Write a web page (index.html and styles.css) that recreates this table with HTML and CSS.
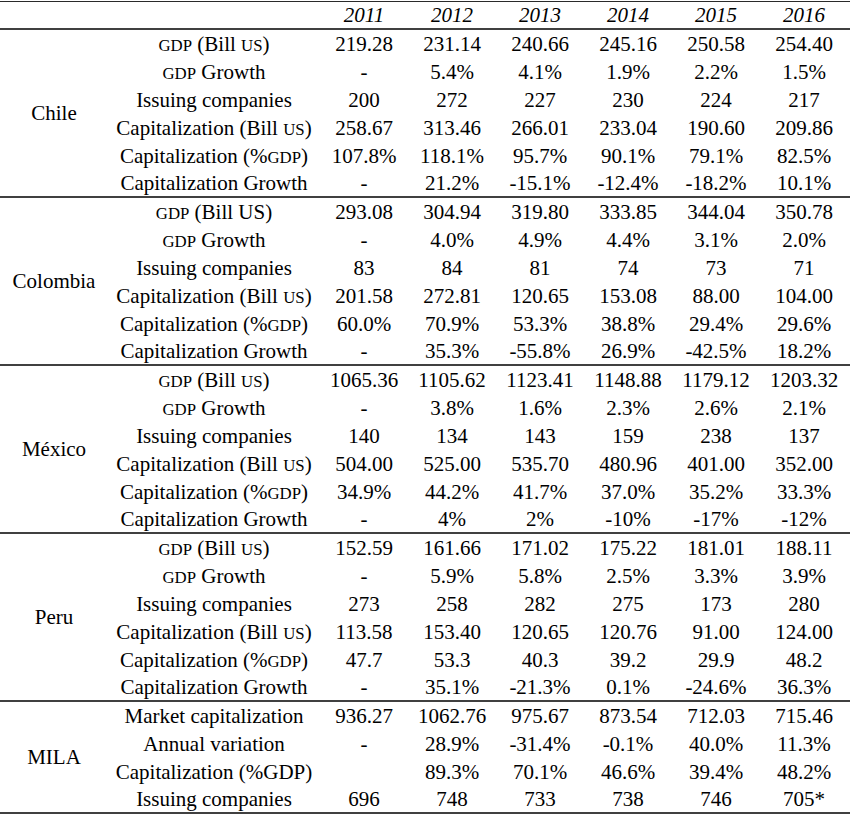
FILE: index.html
```html
<!DOCTYPE html>
<html>
<head>
<meta charset="utf-8">
<link rel="stylesheet" href="styles.css">
</head>
<body>
<div class="table">
  <div class="head">
    <div></div><div></div>
    <div class="yr">2011</div><div class="yr">2012</div><div class="yr">2013</div><div class="yr">2014</div><div class="yr">2015</div><div class="yr">2016</div>
  </div>

  <div class="group six">
    <div class="country">Chile</div>
    <div class="metric"><span class="sc">GDP</span> (Bill <span class="sc">US</span>)</div>
    <div>219.28</div><div>231.14</div><div>240.66</div><div>245.16</div><div>250.58</div><div>254.40</div>
    <div class="metric"><span class="sc">GDP</span> Growth</div>
    <div>-</div><div>5.4%</div><div>4.1%</div><div>1.9%</div><div>2.2%</div><div>1.5%</div>
    <div class="metric">Issuing companies</div>
    <div>200</div><div>272</div><div>227</div><div>230</div><div>224</div><div>217</div>
    <div class="metric">Capitalization (Bill <span class="sc">US</span>)</div>
    <div>258.67</div><div>313.46</div><div>266.01</div><div>233.04</div><div>190.60</div><div>209.86</div>
    <div class="metric">Capitalization (%<span class="sc">GDP</span>)</div>
    <div>107.8%</div><div>118.1%</div><div>95.7%</div><div>90.1%</div><div>79.1%</div><div>82.5%</div>
    <div class="metric">Capitalization Growth</div>
    <div>-</div><div>21.2%</div><div>-15.1%</div><div>-12.4%</div><div>-18.2%</div><div>10.1%</div>
  </div>

  <div class="group six">
    <div class="country">Colombia</div>
    <div class="metric"><span class="sc">GDP</span> (Bill US)</div>
    <div>293.08</div><div>304.94</div><div>319.80</div><div>333.85</div><div>344.04</div><div>350.78</div>
    <div class="metric"><span class="sc">GDP</span> Growth</div>
    <div>-</div><div>4.0%</div><div>4.9%</div><div>4.4%</div><div>3.1%</div><div>2.0%</div>
    <div class="metric">Issuing companies</div>
    <div>83</div><div>84</div><div>81</div><div>74</div><div>73</div><div>71</div>
    <div class="metric">Capitalization (Bill <span class="sc">US</span>)</div>
    <div>201.58</div><div>272.81</div><div>120.65</div><div>153.08</div><div>88.00</div><div>104.00</div>
    <div class="metric">Capitalization (%<span class="sc">GDP</span>)</div>
    <div>60.0%</div><div>70.9%</div><div>53.3%</div><div>38.8%</div><div>29.4%</div><div>29.6%</div>
    <div class="metric">Capitalization Growth</div>
    <div>-</div><div>35.3%</div><div>-55.8%</div><div>26.9%</div><div>-42.5%</div><div>18.2%</div>
  </div>

  <div class="group six">
    <div class="country">México</div>
    <div class="metric"><span class="sc">GDP</span> (Bill <span class="sc">US</span>)</div>
    <div>1065.36</div><div>1105.62</div><div>1123.41</div><div>1148.88</div><div>1179.12</div><div>1203.32</div>
    <div class="metric"><span class="sc">GDP</span> Growth</div>
    <div>-</div><div>3.8%</div><div>1.6%</div><div>2.3%</div><div>2.6%</div><div>2.1%</div>
    <div class="metric">Issuing companies</div>
    <div>140</div><div>134</div><div>143</div><div>159</div><div>238</div><div>137</div>
    <div class="metric">Capitalization (Bill <span class="sc">US</span>)</div>
    <div>504.00</div><div>525.00</div><div>535.70</div><div>480.96</div><div>401.00</div><div>352.00</div>
    <div class="metric">Capitalization (%<span class="sc">GDP</span>)</div>
    <div>34.9%</div><div>44.2%</div><div>41.7%</div><div>37.0%</div><div>35.2%</div><div>33.3%</div>
    <div class="metric">Capitalization Growth</div>
    <div>-</div><div>4%</div><div>2%</div><div>-10%</div><div>-17%</div><div>-12%</div>
  </div>

  <div class="group six">
    <div class="country">Peru</div>
    <div class="metric"><span class="sc">GDP</span> (Bill <span class="sc">US</span>)</div>
    <div>152.59</div><div>161.66</div><div>171.02</div><div>175.22</div><div>181.01</div><div>188.11</div>
    <div class="metric"><span class="sc">GDP</span> Growth</div>
    <div>-</div><div>5.9%</div><div>5.8%</div><div>2.5%</div><div>3.3%</div><div>3.9%</div>
    <div class="metric">Issuing companies</div>
    <div>273</div><div>258</div><div>282</div><div>275</div><div>173</div><div>280</div>
    <div class="metric">Capitalization (Bill <span class="sc">US</span>)</div>
    <div>113.58</div><div>153.40</div><div>120.65</div><div>120.76</div><div>91.00</div><div>124.00</div>
    <div class="metric">Capitalization (%<span class="sc">GDP</span>)</div>
    <div>47.7</div><div>53.3</div><div>40.3</div><div>39.2</div><div>29.9</div><div>48.2</div>
    <div class="metric">Capitalization Growth</div>
    <div>-</div><div>35.1%</div><div>-21.3%</div><div>0.1%</div><div>-24.6%</div><div>36.3%</div>
  </div>

  <div class="group four">
    <div class="country">MILA</div>
    <div class="metric">Market capitalization</div>
    <div>936.27</div><div>1062.76</div><div>975.67</div><div>873.54</div><div>712.03</div><div>715.46</div>
    <div class="metric">Annual variation</div>
    <div>-</div><div>28.9%</div><div>-31.4%</div><div>-0.1%</div><div>40.0%</div><div>11.3%</div>
    <div class="metric">Capitalization (%GDP)</div>
    <div></div><div>89.3%</div><div>70.1%</div><div>46.6%</div><div>39.4%</div><div>48.2%</div>
    <div class="metric">Issuing companies</div>
    <div>696</div><div>748</div><div>733</div><div>738</div><div>746</div><div>705*</div>
  </div>
</div>
</body>
</html>
```

FILE: styles.css
```css
html, body {
  margin: 0;
  padding: 0;
  background: #ffffff;
}

body {
  font-family: "Liberation Serif", "Tinos", "Times New Roman", "DejaVu Serif", serif;
  font-size: 21px;
  color: #000000;
}

.table {
  width: 850px;
  padding-top: 1px;
}

.head,
.group {
  display: grid;
  grid-template-columns: 108px 212px repeat(6, 88px);
  width: 850px;
}

.head {
  border-top: 1px solid #2a2a2a;
  border-bottom: 2px solid #404040;
  grid-template-rows: 26px;
}

.group {
  border-bottom: 2px solid #404040;
}

.group.six {
  grid-template-rows: repeat(5, 28px) 26px;
}

.group.four {
  grid-template-rows: repeat(3, 28px) 26px;
}

.head > div,
.group > div {
  align-self: center;
  text-align: center;
  white-space: nowrap;
  line-height: 24px;
}

.yr {
  font-style: italic;
}

.country {
  grid-column: 1;
  grid-row: 1 / -1;
}

.sc {
  font-size: 0.8em;
  line-height: 1;
}
```
